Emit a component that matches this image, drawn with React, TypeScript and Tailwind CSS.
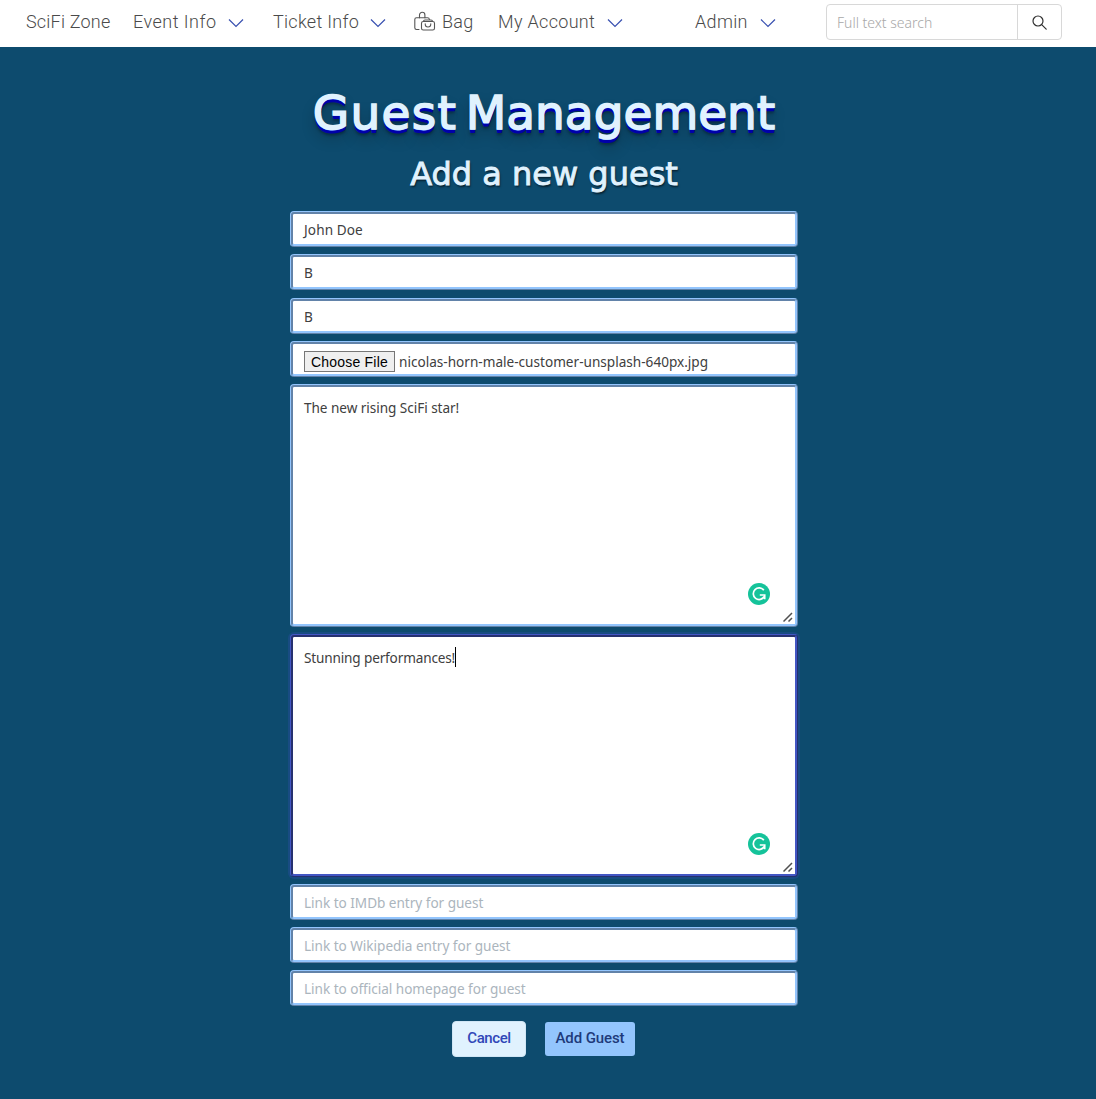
import type { ReactNode } from 'react';

const field =
  'relative w-[508px] shrink-0 rounded-[4px] border-[3px] bg-white px-[11px] text-[13.6px] text-[#404040]';
const ridge = 'border-[#93c5fd] [border-style:ridge]';
const focused = 'border-[#4356c4] [border-style:ridge] shadow-[0_0_0_2px_rgba(50,80,180,.3)]';

function Chevron() {
  return (
    <svg className="h-[10px] w-[16px] shrink-0" viewBox="0 0 16 10" fill="none" stroke="#3850b0" strokeWidth="1.2">
      <path d="M1 1.5 8 8.5 15 1.5" />
    </svg>
  );
}

function NavItem({ label, className, chevron = true }: { label: string; className: string; chevron?: boolean }) {
  return (
    <a className={`flex shrink-0 items-center justify-between whitespace-nowrap ${className}`}>
      <span>{label}</span>
      {chevron && (
        <span className="mt-[4px]">
          <Chevron />
        </span>
      )}
    </a>
  );
}

function BagIcon() {
  return (
    <svg className="h-[20px] w-[22px] shrink-0" viewBox="0 0 22 20" fill="none" stroke="#555" strokeWidth="1.1" strokeLinecap="round" strokeLinejoin="round">
      <path d="M5 18.500H2.500Q.800 18.500.800 16.800V8.500Q.800 6.800 2.500 6.800H13.500Q15.200 6.800 15.400 8.500" />
      <path d="M5.500 6.800V4a2.700 2.700 0 0 1 5.400 0V6.800" />
      <rect x="7.500" y="10.500" width="13" height="8.500" rx="1.800" />
      <path d="M9.500 10.500Q9.500 9 11 9H17Q18.500 9 18.500 10.500M11.200 12.700Q11.200 16 14 16T16.800 12.700" />
    </svg>
  );
}

function Field({ children, placeholder = false, className = 'pt-[2px]' }: { children: ReactNode; placeholder?: boolean; className?: string }) {
  return (
    <div className={`${field} ${ridge} flex h-[36px] items-center ${className}`}>
      <span className={placeholder ? 'text-[#abb5bd]' : ''}>{children}</span>
    </div>
  );
}

function AreaMarks() {
  return (
    <>
      <svg className="absolute right-[25px] bottom-[19px] size-[22px]" viewBox="0 0 22 22" fill="none">
        <circle cx="11" cy="11" r="11" fill="#15c39a" />
        <path d="M15.800 7.300A5.800 5.800 0 1 0 16.200 13.500" stroke="#fff" strokeWidth="1.700" />
        <path d="M11.800 12H16.700V16.300" stroke="#fff" strokeWidth="1.700" />
      </svg>
      <svg className="absolute right-[2px] bottom-[2px] size-[10px]" viewBox="0 0 10 10" stroke="#505050" strokeWidth="1.500">
        <path d="M.5 9.500 9 1M5.500 9.500 9 6" />
      </svg>
    </>
  );
}

export default function App() {
  return (
    <div className="flex h-[1099px] w-[1096px] flex-col overflow-hidden bg-[#0d4b6e] font-['Noto_Sans',sans-serif]">
      <nav className="flex h-[47px] shrink-0 items-center bg-white pb-[3px] pl-[26px] font-['Roboto',sans-serif] text-[18px] font-[350] text-[#4a4a4a]">
        <div className="flex items-center pb-[2px] tracking-[0.320px]">
          <NavItem label="SciFi Zone" chevron={false} className="w-[107px] tracking-[0.200px]" />
          <NavItem label="Event Info" className="mr-[29px] w-[111px] tracking-[0.480px]" />
          <NavItem label="Ticket Info" className="mr-[28px] w-[113px] tracking-[0.280px]" />
          <a className="flex w-[84px] items-center gap-[6px]">
            <BagIcon />
            <span>Bag</span>
          </a>
          <NavItem label="My Account" className="mr-[72px] w-[125px]" />
          <NavItem label="Admin" className="w-[81px]" />
        </div>
        <div className="ml-[50px] flex h-[36px] w-[236px] overflow-hidden rounded-[4px] border border-[#d8d8d8] font-['Noto_Sans',sans-serif] text-[14px]">
          <span className="flex w-[191px] items-center border-r border-[#d8d8d8] pt-[1px] pl-[10px] font-light text-[#a8a8a8]">Full text search</span>
          <span className="flex flex-1 items-center justify-center">
            <svg className="size-[15px]" viewBox="0 0 15 15" fill="none" stroke="#303030" strokeWidth="1.200" strokeLinecap="round">
              <circle cx="6" cy="6" r="5" />
              <path d="m9.700 9.700 4.500 4.500" />
            </svg>
          </span>
        </div>
      </nav>

      <main className="flex flex-col items-center pt-[38px] pr-[8px]">
        <h1 className="h-[60px] whitespace-nowrap font-['DejaVu_Sans',sans-serif] text-[47px] leading-[56px] text-[#e0f2fe] [-webkit-text-stroke:1.5px_#e0f2fe] [text-shadow:0_1px_0_#60a5fa,0_2px_0_#0000aa,0_3px_0_#0000aa,0_4px_0_#0000aa,0_6px_3px_rgba(0,0,0,.35),0_9px_14px_rgba(0,0,0,.3)]">
          <span className="tracking-[1.300px] [word-spacing:-7.800px]">Guest </span>Management
        </h1>
        <h2 className="mt-[9px] h-[57px] whitespace-nowrap font-['DejaVu_Sans',sans-serif] text-[32px] leading-[40px] text-[#e0f2fe] [-webkit-text-stroke:0.900px_#e0f2fe] [text-shadow:1px_2px_2px_rgba(0,0,0,.6)]">
          Add a new guest
        </h2>

        <form className="flex flex-col gap-[7px]">
          <Field className="pt-[2px] tracking-[0.100px]">John Doe</Field>
          <Field>B</Field>
          <Field className="mt-px pt-[2px]">B</Field>
          <div className={`${field} ${ridge} flex h-[36px] items-center gap-[4px] pt-[5px]`}>
            <span className="flex h-[21px] w-[91px] shrink-0 items-center justify-center border border-[#767676] bg-[#efefef] pt-px font-['Liberation_Sans',sans-serif] text-[14px] tracking-[0.200px] whitespace-nowrap text-black">
              Choose File
            </span>
            <span className="pt-[1px]">nicolas-horn-male-customer-unsplash-640px.jpg</span>
          </div>
          <div className={`${field} ${ridge} h-[243px] pt-[10px] leading-[21px] tracking-[-0.050px]`}>
            The new rising SciFi star!
            <AreaMarks />
          </div>
          <div className={`${field} ${focused} flex h-[243px] items-start pt-[10px] leading-[21px] tracking-[-0.160px]`}>
            Stunning performances!
            <span className="h-[20px] w-px bg-black" />
            <AreaMarks />
          </div>
          <Field placeholder className="pt-[2px] tracking-[-0.030px]">Link to IMDb entry for guest</Field>
          <Field placeholder className="pt-[2px] tracking-[-0.030px]">Link to Wikipedia entry for guest</Field>
          <Field placeholder className="pt-[2px] tracking-[-0.030px]">Link to official homepage for guest</Field>
        </form>

        <div className="mt-[15px] mr-[1px] flex items-center gap-[19px] font-['Roboto',sans-serif] text-[15px] font-medium">
          <button type="button" className="h-[36px] w-[74px] rounded-[4px] border border-[#d0e6f5] bg-[#e0f2fe] pb-[2px] tracking-[-0.400px] text-[#3048b8]">
            Cancel
          </button>
          <button type="button" className="h-[34px] w-[90px] rounded-[3px] bg-[#93c5fd] pb-[2px] tracking-[-0.100px] text-[#1e3a7a]">
            Add Guest
          </button>
        </div>
      </main>
    </div>
  );
}
